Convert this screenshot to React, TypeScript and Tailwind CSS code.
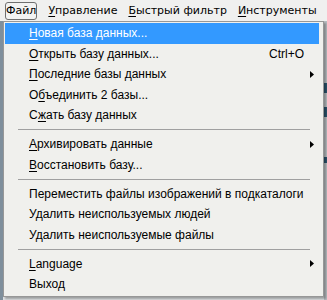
import React from "react";

type Item =
  | { sep: true }
  | { sep?: false; pre: string; u?: string; post?: string; shortcut?: string; arrow?: boolean; active?: boolean };

const items: Item[] = [
  { pre: "", u: "Н", post: "овая база данных...", active: true },
  { pre: "", u: "О", post: "ткрыть базу данных...", shortcut: "Ctrl+O" },
  { pre: "", u: "П", post: "оследние базы данных", arrow: true },
  { pre: "О", u: "б", post: "ъединить 2 базы..." },
  { pre: "С", u: "ж", post: "ать базу данных" },
  { sep: true },
  { pre: "", u: "А", post: "рхивировать данные", arrow: true },
  { pre: "", u: "В", post: "осстановить базу..." },
  { sep: true },
  { pre: "Переместить файлы изображений в подкаталоги" },
  { pre: "Удалить неиспользуемых людей" },
  { pre: "Удалить неиспользуемые файлы" },
  { sep: true },
  { pre: "", u: "L", post: "anguage", arrow: true },
  { pre: "Выход" },
];

function Arrow({ white }: { white?: boolean }) {
  return (
    <svg width="4" height="7" viewBox="0 0 4 7" className="shrink-0">
      <path d="M0 0 L4 3.5 L0 7 Z" fill={white ? "#fff" : "#000"} />
    </svg>
  );
}

const barItems: [string, string][] = [
  ["У", "правление"],
  ["Б", "ыстрый фильтр"],
  ["И", "нструменты"],
  ["О", "т"],
];

export default function App() {
  return (
    <div className="relative w-[327px] h-[300px] overflow-hidden bg-[#c9ccd0] leading-none text-black">
      {/* Menu bar */}
      <div
        className="flex h-[21px] items-center bg-[#f0f0ef] pl-[5px] text-[11px] whitespace-nowrap"
        style={{ fontFamily: '"DejaVu Sans", Verdana, sans-serif' }}
      >
        <div className="flex h-[18px] w-[36px] items-center justify-center rounded-[3px] border border-[#6f6f6f] bg-[#f3f3f2]">
          Файл
        </div>
        {barItems.map(([u, rest]) => (
          <div key={rest} className="ml-[11px] flex items-center first:ml-[6px]">
            <span className="underline decoration-1 underline-offset-2">{u}</span>
            {rest}
          </div>
        ))}
      </div>

      {/* Background app content */}
      <div className="flex h-[279px]">
        <div className="w-[3px] bg-[#7f8f9c]" />
        <div className="flex-1 bg-[#dfe2e4]" />
        <div className="flex w-[3px] flex-col bg-[#b9bec2]">
          <div className="mt-[62px] h-[10px] bg-[#2a536c]" />
          <div className="mt-[14px] h-[10px] bg-[#2a536c]" />
          <div className="mt-[40px] h-[6px] bg-[#2a536c]" />
        </div>
      </div>

      {/* Dropdown menu */}
      <div
        className="absolute left-[3px] top-[21px] w-[321px] border border-[#979797] bg-[#f0f0ed] py-[1px] pl-[1px] pr-[4px] text-[12px] shadow-[2px_2px_2px_rgba(0,0,0,0.3)]"
        style={{ fontFamily: '"Liberation Sans", Arial, sans-serif' }}
      >
        {items.map((it, i) =>
          it.sep ? (
            <div key={i} className="flex h-[8.5px] items-center pl-[13px] pr-[9px]">
              <div className="h-px w-full bg-[#a0a0a0]" />
            </div>
          ) : (
            <div
              key={i}
              className={
                "flex h-[20.5px] items-center whitespace-nowrap pl-[24px] pr-[5px] " +
                (it.active ? "bg-[#3399ff] text-white" : "")
              }
            >
              <span className="flex-1">
                {it.pre}
                {it.u && <span className="underline decoration-1 underline-offset-2">{it.u}</span>}
                {it.post}
              </span>
              {it.shortcut && <span className="mr-[10px]">{it.shortcut}</span>}
              {it.arrow && <Arrow white={it.active} />}
            </div>
          )
        )}
      </div>
    </div>
  );
}
